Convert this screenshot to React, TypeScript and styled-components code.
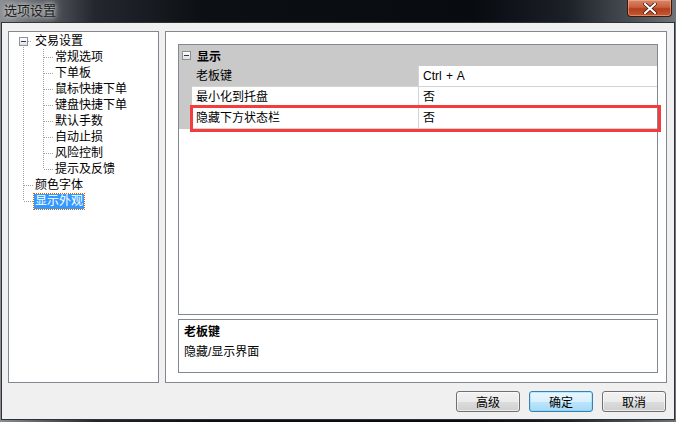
import React from "react";
import styled, { createGlobalStyle, css } from "styled-components";

const Global = createGlobalStyle`
  html, body { margin: 0; padding: 0; background: #1b1f25; }
  body { font-family: "Liberation Sans", "Noto Sans CJK SC", sans-serif; font-size: 12px; }
`;

const FONT = `"Liberation Sans", "Noto Sans CJK SC", sans-serif`;

const Window = styled.div`
  width: 676px;
  height: 422px;
  display: flex;
  flex-direction: column;
  box-sizing: border-box;
  background: linear-gradient(90deg, #8b8f94 0%, #5d6167 6%, #24282e 14%, #0c0f14 30%, #080b10 70%, #1c2027 84%, #4d5259 94%, #6f737a 100%);
`;

const TitleBar = styled.div`
  height: 22px;
  flex: none;
  display: flex;
  align-items: flex-start;
  justify-content: space-between;
  position: relative;
`;

const Title = styled.span`
  font-family: ${FONT};
  font-size: 13px;
  line-height: 14px;
  margin: 4px 0 0 4px;
  color: #1c1c1c;
  text-shadow: 0 0 4px #e6e6e6, 0 0 8px #d0d0d0;
`;

const CloseButton = styled.div`
  width: 45px;
  height: 17px;
  margin-right: 4px;
  box-sizing: border-box;
  border: 1px solid #3d1a0e;
  border-top: none;
  border-radius: 0 0 4px 4px;
  background: linear-gradient(180deg, #d9876a 0%, #c8603e 45%, #b23e1c 55%, #c55a35 100%);
  box-shadow: inset 0 0 0 1px rgba(255, 200, 170, 0.45);
  display: flex;
  align-items: center;
  justify-content: center;
`;

const Body = styled.div`
  flex: 1;
  margin: 0 1px 2px 1px;
  border: 1px solid #2e3238;
  background: #f0f0f0;
  display: flex;
  flex-direction: column;
  padding: 8px 7px 0 6px;
`;

const Main = styled.div`
  height: 352px;
  display: flex;
  gap: 6px;
`;

const Panel = styled.div<{ $w?: number }>`
  box-sizing: border-box;
  height: 100%;
  border: 1px solid #828790;
  background: #fff;
  ${(p) => (p.$w ? css`width: ${p.$w}px; flex: none;` : css`flex: 1;`)}
`;

const TreeList = styled.div`
  padding: 1px 0 0 5px;
  display: flex;
  flex-direction: column;
`;

const TreeRow = styled.div`
  height: 16px;
  display: flex;
  align-items: center;
`;

const dotV = "repeating-linear-gradient(180deg, #a0a0a0 0 1px, transparent 1px 2px)";
const dotH = "repeating-linear-gradient(90deg, #a0a0a0 0 1px, transparent 1px 2px)";

const Guide = styled.div<{ $v: "full" | "half" | "bottom" | "none"; $h?: boolean; $hw?: number }>`
  width: 20px;
  height: 16px;
  flex: none;
  position: relative;
  &::before {
    content: "";
    position: absolute;
    left: 9px;
    width: 1px;
    display: ${(p) => (p.$v === "none" ? "none" : "block")};
    top: ${(p) => (p.$v === "bottom" ? "8px" : "0")};
    height: ${(p) => (p.$v === "full" ? "16px" : "8px")};
    background: ${dotV};
  }
  &::after {
    content: "";
    position: absolute;
    left: 10px;
    top: 8px;
    height: 1px;
    width: ${(p) => p.$hw ?? 9}px;
    display: ${(p) => (p.$h ? "block" : "none")};
    background: ${dotH};
  }
`;

const ExpandBox = styled.div`
  position: absolute;
  left: 5px;
  top: 4px;
  width: 9px;
  height: 9px;
  box-sizing: border-box;
  border: 1px solid #919191;
  background: linear-gradient(180deg, #ffffff, #e2e2e2);
  z-index: 1;
  display: flex;
  align-items: center;
  justify-content: center;
  &::after {
    content: "";
    width: 5px;
    height: 1px;
    background: #1e3b6e;
  }
`;

const TreeLabel = styled.span<{ $sel?: boolean }>`
  font-family: ${FONT};
  font-size: 12px;
  line-height: 15px;
  color: #000;
  padding: 0 1px;
  white-space: nowrap;
  ${(p) =>
    p.$sel &&
    css`
      background: #3399ff;
      color: #fff;
      outline: 1px dotted #cc6600;
    `}
`;

const RightInner = styled.div`
  height: 100%;
  box-sizing: border-box;
  padding: 12px 8px 9px 12px;
  display: flex;
  flex-direction: column;
  gap: 4px;
`;

const Grid = styled.div`
  flex: 1;
  border: 1px solid #828790;
  background: #fff;
  display: flex;
  flex-direction: column;
  position: relative;
`;

const GroupRow = styled.div`
  height: 21px;
  display: flex;
  align-items: center;
  background: #c9c9c9;
`;

const GroupBox = styled.div`
  width: 9px;
  height: 9px;
  margin: 0 6px 0 3px;
  box-sizing: border-box;
  border: 1px solid #8e8e8e;
  background: linear-gradient(180deg, #ffffff, #e0e0e0);
  display: flex;
  align-items: center;
  justify-content: center;
  &::after {
    content: "";
    width: 5px;
    height: 1px;
    background: #1e3b6e;
  }
`;

const GroupTitle = styled.span`
  font-family: ${FONT};
  font-size: 12px;
  font-weight: bold;
  color: #000;
`;

const PropRow = styled.div`
  height: 21px;
  display: flex;
  position: relative;
`;

const Gutter = styled.div`
  width: 13px;
  flex: none;
  background: #c9c9c9;
`;

const Cell = styled.div<{ $w?: number; $gray?: boolean }>`
  box-sizing: border-box;
  ${(p) => (p.$w ? css`width: ${p.$w}px; flex: none;` : css`flex: 1;`)}
  background: ${(p) => (p.$gray ? "#c9c9c9" : "#fff")};
  border-bottom: 1px solid #d4d4d4;
  border-right: ${(p) => (p.$w ? "1px solid #d4d4d4" : "none")};
  padding-left: 4px;
  font-family: ${FONT};
  font-size: 12px;
  line-height: 20px;
  color: #000;
  white-space: nowrap;
  word-spacing: 1px;
`;

const Highlight = styled.div`
  position: absolute;
  left: 11px;
  right: -4px;
  top: -3px;
  bottom: -3px;
  border: 3px solid #f43c3c;
  pointer-events: none;
`;

const Desc = styled.div`
  height: 54px;
  flex: none;
  box-sizing: border-box;
  border: 1px solid #828790;
  background: #fff;
  padding: 4px 0 0 5px;
  font-family: ${FONT};
  font-size: 12px;
  color: #000;
  display: flex;
  flex-direction: column;
  gap: 4px;
`;

const DescTitle = styled.div`
  font-weight: bold;
  line-height: 16px;
`;

const DescText = styled.div`
  line-height: 16px;
`;

const Footer = styled.div`
  display: flex;
  justify-content: flex-end;
  gap: 9px;
  padding: 8px 1px 0 0;
`;

const Button = styled.button<{ $primary?: boolean }>`
  width: 64px;
  height: 21px;
  box-sizing: border-box;
  border-radius: 3px;
  font-family: ${FONT};
  font-size: 12px;
  color: #000;
  padding: 0;
  border: 1px solid ${(p) => (p.$primary ? "#3c7fb1" : "#707070")};
  background: ${(p) =>
    p.$primary
      ? "linear-gradient(180deg, #eaf6fd 0%, #d9f0fc 50%, #bee6fd 51%, #a7d9f5 100%)"
      : "linear-gradient(180deg, #f2f2f2 0%, #ebebeb 50%, #dddddd 51%, #cfcfcf 100%)"};
  box-shadow: inset 0 0 0 1px ${(p) => (p.$primary ? "#48d8fb55" : "#ffffff99")};
`;

const children = ["常规选项", "下单板", "鼠标快捷下单", "键盘快捷下单", "默认手数", "自动止损", "风险控制", "提示及反馈"];

export default function App() {
  return (
    <>
      <Global />
      <Window>
        <TitleBar>
          <Title>选项设置</Title>
          <CloseButton>
            <svg width="14" height="11" viewBox="0 0 14 11">
              <path d="M2 1 L12 10 M12 1 L2 10" stroke="#3a1408" strokeWidth="3.6" strokeLinecap="round" />
              <path d="M2 1 L12 10 M12 1 L2 10" stroke="#ffffff" strokeWidth="2.2" strokeLinecap="round" />
            </svg>
          </CloseButton>
        </TitleBar>
        <Body>
          <Main>
            <Panel $w={151}>
              <TreeList>
                <TreeRow>
                  <Guide $v="bottom" $h $hw={7}>
                    <ExpandBox />
                  </Guide>
                  <TreeLabel>交易设置</TreeLabel>
                </TreeRow>
                {children.map((c, i) => (
                  <TreeRow key={c}>
                    <Guide $v="full" />
                    <Guide $v={i === children.length - 1 ? "half" : "full"} $h $hw={9} />
                    <TreeLabel>{c}</TreeLabel>
                  </TreeRow>
                ))}
                <TreeRow>
                  <Guide $v="full" $h $hw={9} />
                  <TreeLabel>颜色字体</TreeLabel>
                </TreeRow>
                <TreeRow>
                  <Guide $v="half" $h $hw={9} />
                  <TreeLabel $sel>显示外观</TreeLabel>
                </TreeRow>
              </TreeList>
            </Panel>
            <Panel>
              <RightInner>
                <Grid>
                  <GroupRow>
                    <GroupBox />
                    <GroupTitle>显示</GroupTitle>
                  </GroupRow>
                  <PropRow>
                    <Gutter />
                    <Cell $w={227} $gray>老板键</Cell>
                    <Cell>Ctrl + A</Cell>
                  </PropRow>
                  <PropRow>
                    <Gutter />
                    <Cell $w={227}>最小化到托盘</Cell>
                    <Cell>否</Cell>
                  </PropRow>
                  <PropRow>
                    <Gutter />
                    <Cell $w={227}>隐藏下方状态栏</Cell>
                    <Cell>否</Cell>
                    <Highlight />
                  </PropRow>
                </Grid>
                <Desc>
                  <DescTitle>老板键</DescTitle>
                  <DescText>隐藏/显示界面</DescText>
                </Desc>
              </RightInner>
            </Panel>
          </Main>
          <Footer>
            <Button>高级</Button>
            <Button $primary>确定</Button>
            <Button>取消</Button>
          </Footer>
        </Body>
      </Window>
    </>
  );
}
